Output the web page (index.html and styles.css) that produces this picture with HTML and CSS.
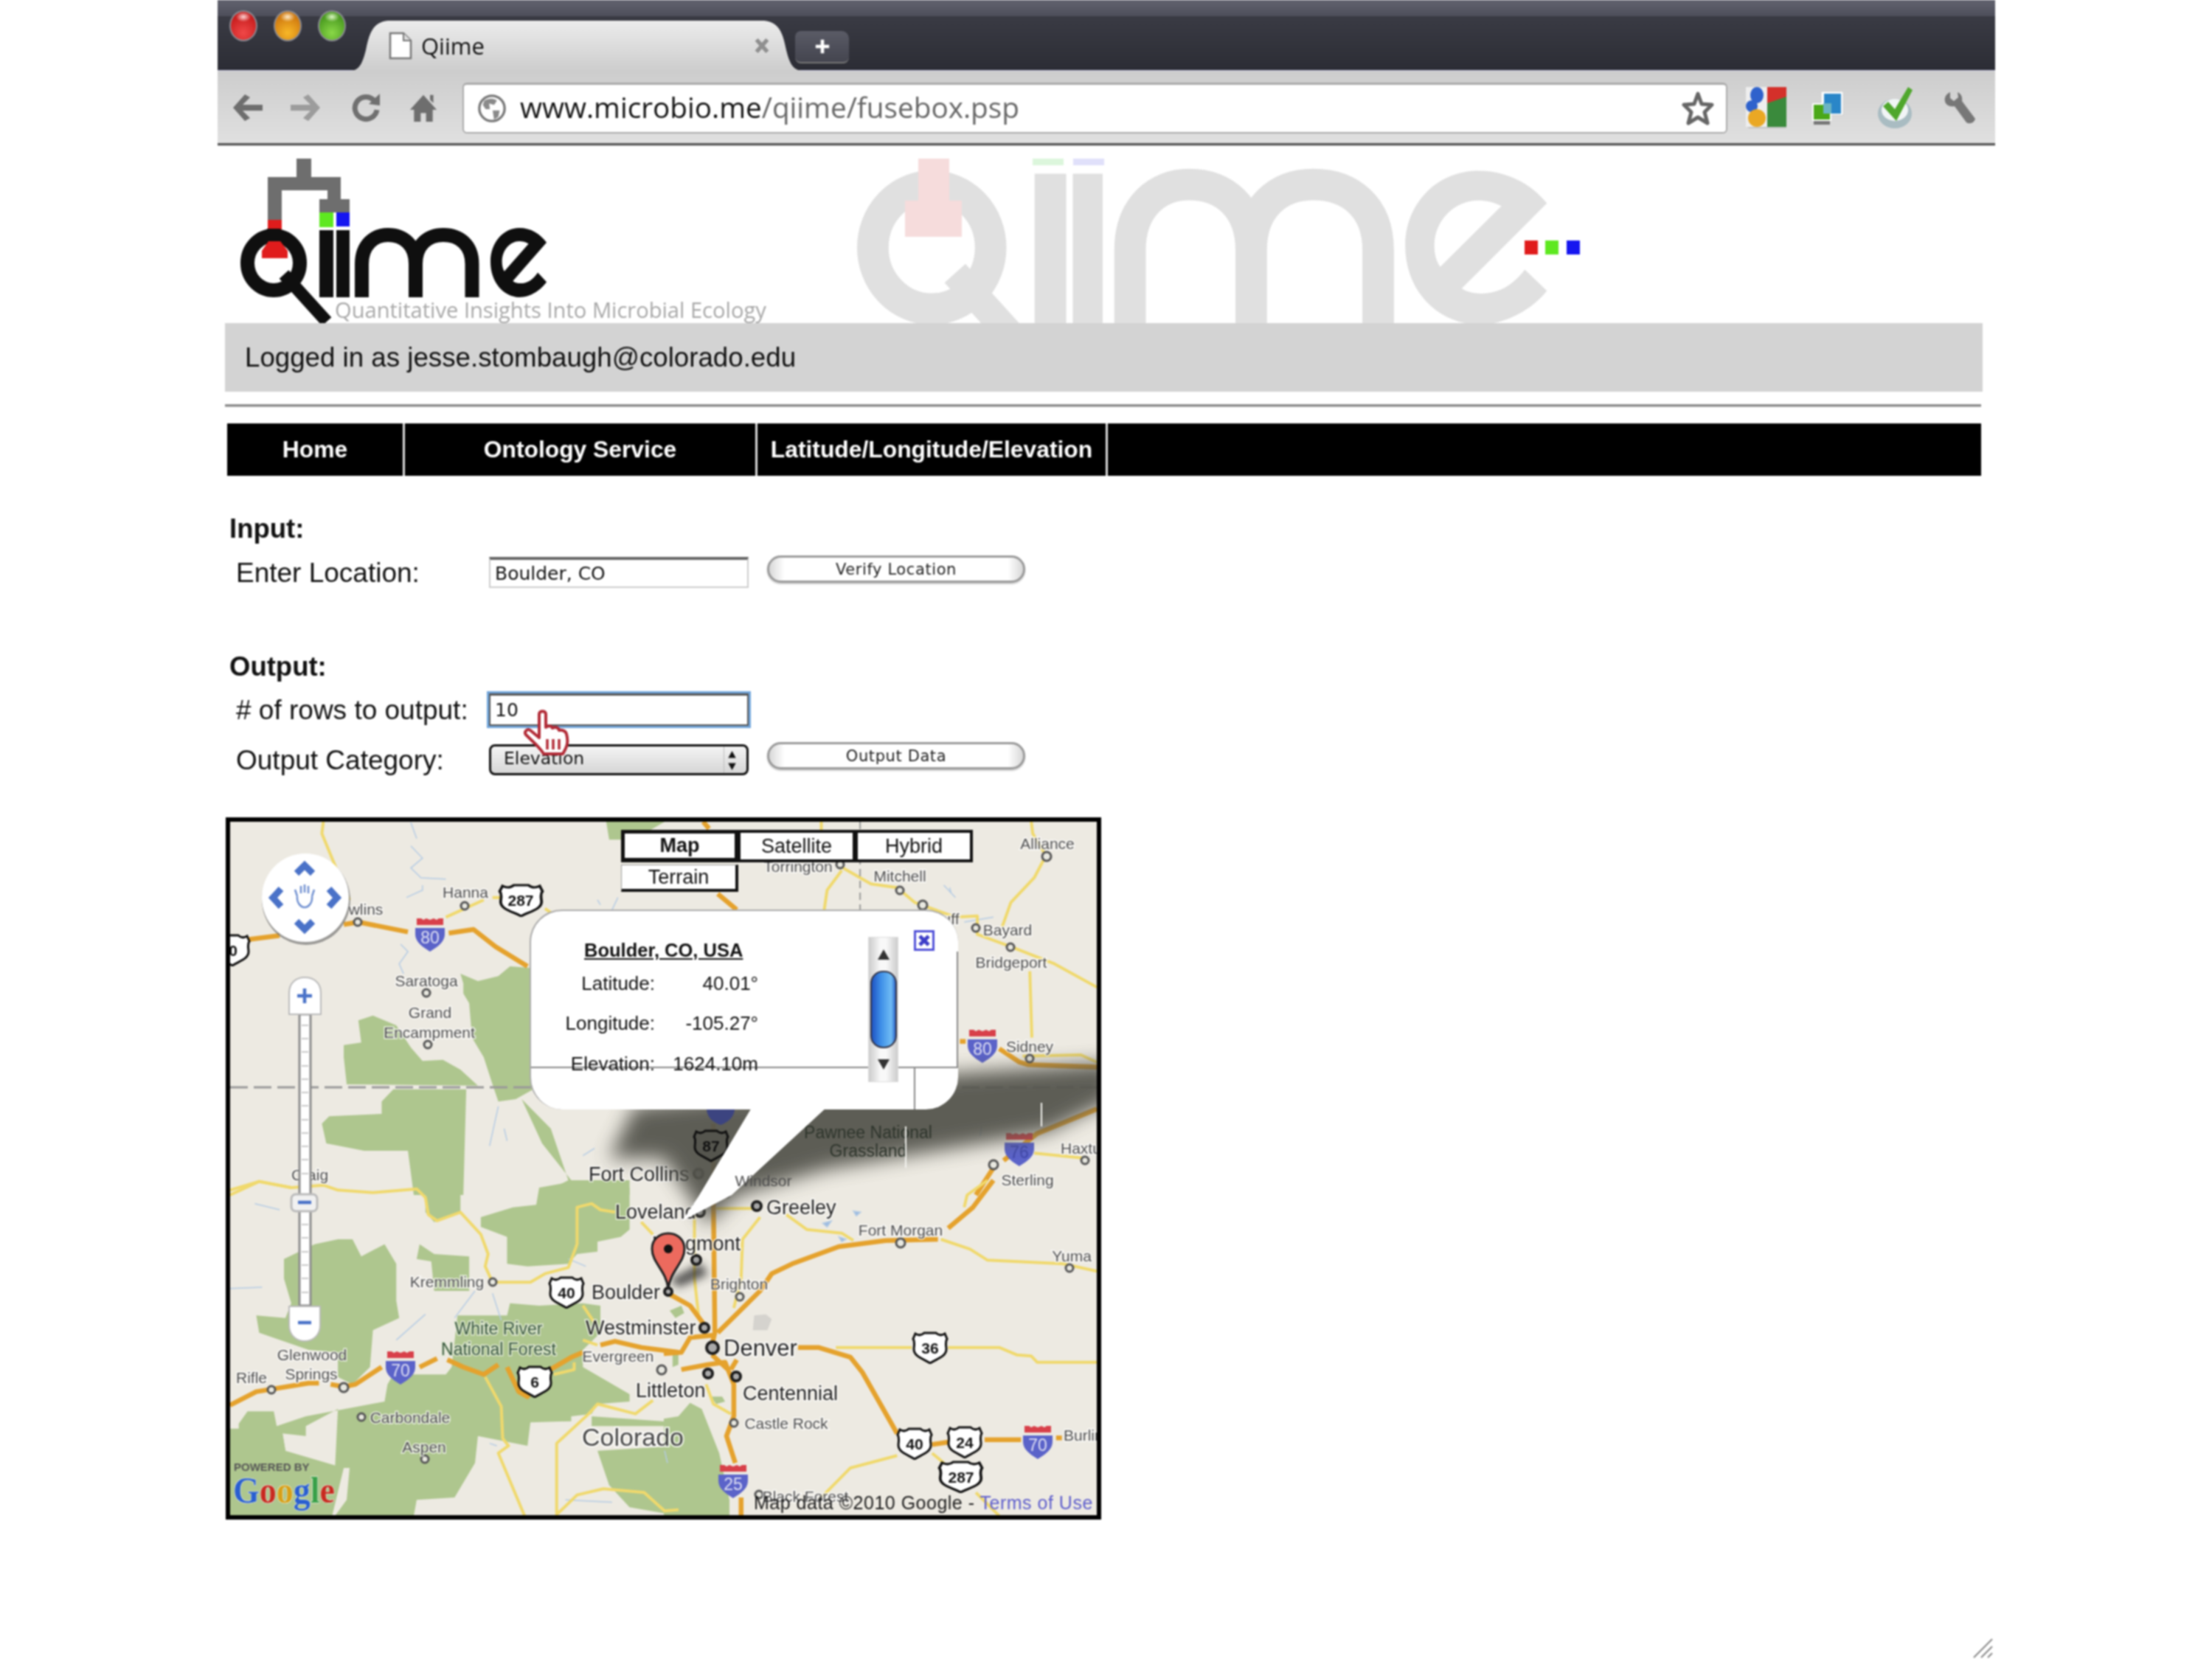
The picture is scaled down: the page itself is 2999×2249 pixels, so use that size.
FILE: index.html
```html
<!DOCTYPE html>
<html lang="en">
<head>
<meta charset="utf-8">
<title>Qiime</title>
<link rel="stylesheet" href="styles.css">
</head>
<body>
<div class="window">
  <header class="chrome">
    <div class="tabstrip">
      <div class="lights"><span class="light red"></span><span class="light amber"></span><span class="light green"></span></div>
      <div class="tab">
        <svg class="tab-bg" viewBox="0 0 616 68" preserveAspectRatio="none"><defs><linearGradient id="tabg" x1="0" y1="0" x2="0" y2="1"><stop offset="0" stop-color="#ececec"/><stop offset="1" stop-color="#cdcdcd"/></linearGradient></defs><path d="M0 68C12 68 17 60 22 40C27 14 33 2 52 0H562C581 2 587 14 592 40C597 60 602 68 616 68Z" fill="url(#tabg)"/></svg>
        <svg class="doc" viewBox="0 0 33 38"><path d="M3 2H21L31 12V36H3Z" fill="#fff" stroke="#777" stroke-width="2.5"/><path d="M21 2V12H31" fill="#ddd" stroke="#777" stroke-width="2"/></svg>
        <span class="tab-title">Qiime</span>
        <svg class="tab-close" viewBox="0 0 24 24"><path d="M4 3L20 21M20 3L4 21" stroke="#8f8f8f" stroke-width="6"/></svg>
      </div>
      <div class="newtab"><svg viewBox="0 0 24 24" class="plus"><path d="M12 2V22M2 12H22" stroke="#fff" stroke-width="5"/></svg></div>
    </div>
    <div class="toolbar">
      <div class="navbtns">
        <svg class="nav-i" viewBox="0 0 40 38"><path d="M0 19L16 1L23 5L13 15H40V23H13L23 33L16 37Z" fill="#6e6e6e"/></svg>
        <svg class="nav-i" viewBox="0 0 40 38"><path d="M40 19L24 1L17 5L27 15H0V23H27L17 33L24 37Z" fill="#9c9c9c"/></svg>
        <svg class="nav-i nav-r" viewBox="0 0 40 38"><path d="M31 9A15 15 0 1 0 35 22" fill="none" stroke="#707070" stroke-width="7"/><path d="M24 14L39 0V16Z" fill="#707070"/></svg>
        <svg class="nav-i" viewBox="0 0 40 42"><path d="M20 2L40 24H34V42H24V29H16V42H6V24H0Z" fill="#6e6e6e"/><path d="M30 2H35V14L30 9Z" fill="#6e6e6e"/></svg>
      </div>
      <div class="omnibox">
        <svg class="globe" viewBox="0 0 42 42"><circle cx="21" cy="21" r="18" fill="#fff" stroke="#777" stroke-width="3.5"/><path d="M10 10C16 6 24 6 28 10L24 16L17 14L18 22L12 22L8 16ZM22 24L32 24L30 33L24 37Z" fill="#8a8a8a"/></svg>
        <div class="url"><span class="url-host">www.microbio.me</span><span class="url-path">/qiime/fusebox.psp</span></div>
        <svg class="star" viewBox="0 0 44 46"><path d="M22 3L27 17L41 18L31 28L35 43L22 35L9 43L13 28L3 18L17 17Z" fill="#fff" stroke="#666" stroke-width="5" stroke-linejoin="round"/></svg>
      </div>
      <div class="exts">
        <svg class="ext-g" viewBox="0 0 55 56"><rect x="3" y="4" width="52" height="52" fill="#999" opacity=".35"/><path d="M29 0H55V15L29 22Z" fill="#d4302a"/><path d="M29 22L55 13V54H29V40Z" fill="#3a8a3c"/><path d="M0 0H29V54H0Z" fill="#eee"/><ellipse cx="15" cy="11" rx="9" ry="11" fill="#2f62cc"/><ellipse cx="8" cy="26" rx="8" ry="8" fill="#2f62cc"/><ellipse cx="15" cy="42" rx="12" ry="12" fill="#eaa824"/></svg>
        <svg class="ext-b" viewBox="0 0 46 48"><rect x="14" y="2" width="30" height="32" fill="#fff" stroke="#ccc"/><rect x="18" y="5" width="23" height="27" fill="#2a86c8"/><rect x="2" y="18" width="26" height="24" fill="#fff"/><rect x="4" y="20" width="22" height="20" fill="#4aa818"/><rect x="17" y="18" width="11" height="14" fill="#6cb4c4"/><rect x="4" y="42" width="22" height="5" fill="#777"/></svg>
        <svg class="ext-c" viewBox="0 0 50 56"><ellipse cx="24" cy="36" rx="23" ry="20" fill="#a9bcc2"/><ellipse cx="24" cy="31" rx="18" ry="15" fill="#f2f5f6"/><path d="M8 26L15 20L24 30L42 0L48 4L26 46Z" fill="#4fa72c"/></svg>
        <svg class="ext-w" viewBox="0 0 44 44"><path d="M9 1C2 4 0 11 3 16C6 20 10 21 15 20L31 42C36 45 42 42 43 37L25 13C26 8 24 3 19 1L20 8L14 13L9 9Z" fill="#777"/></svg>
      </div>
    </div>
  </header>

  <main class="page">
    <svg class="banner" viewBox="305 198 2383 240" width="2383" height="240">
      <defs>
        <g id="letters">
          <ellipse cx="371" cy="356.5" rx="35.500" ry="37" fill="none" stroke-width="19"/>
          <path d="M385 372L443 436" fill="none" stroke-width="17"/>
          <rect x="433" y="312" width="19" height="91" stroke="none"/>
          <rect x="456" y="312" width="18" height="91" stroke="none"/>
          <path d="M490.500 403V358C490.500 332 507 318.500 526 318.500C547 318.500 563.500 332 563.500 358V403M563.500 358C563.500 332 580 318.500 601 318.500C623 318.500 640 332 640 358V403" fill="none" stroke-width="19"/>
        </g>
        <path id="epath" fill-rule="evenodd" d="M768 720C740 650 700 605 650 605C580 605 525 720 525 870C525 1030 580 1145 650 1150C700 1150 745 1090 768 1030L730 955C710 1010 685 1040 655 1040C645 1040 630 1035 622 1022ZM690 730C675 715 665 710 650 710C610 710 575 780 575 870C575 900 578 925 585 945Z"/>
      </defs>
      <use href="#letters" class="wm-l" transform="translate(1162 231) scale(2.25) translate(-326 -310)"/>
      <use href="#epath" class="wm-e" transform="translate(1490 0) scale(.7908 .3827)"/>
      <path class="wm-r" d="M1245 215H1287V272H1304V321H1227V272H1245Z"/>
      <rect class="wm-g" x="1400" y="215" width="42" height="9"/>
      <rect class="wm-b" x="1455" y="215" width="42" height="9"/>
      <rect class="lg-r" x="2067" y="326" width="18" height="19"/>
      <rect class="lg-g" x="2095" y="326" width="18" height="19"/>
      <rect class="lg-bl" x="2124" y="326" width="18" height="19"/>
      <path class="tree" d="M402 215H422V240H462V270H474V288H433V270H444V258H382V298H363V240H402Z"/>
      <rect class="lg-r" x="363" y="298" width="19" height="17"/>
      <rect class="lg-g" x="433" y="288" width="19" height="20"/>
      <rect class="lg-bl" x="456" y="288" width="18" height="19"/>
      <use href="#letters" class="sm-l"/>
      <use href="#epath" class="sm-e" transform="translate(665 309) scale(.3128 .1725) translate(-525 -605)"/>
      <path class="lg-r" d="M364 327H380L390 340V350H355V340Z"/>
      <path class="q-over" d="M362 310H380V327H362Z"/>
      <text class="tagline" x="454" y="431">Quantitative Insights Into Microbial Ecology</text>
    </svg>

    <div class="status">Logged in as jesse.stombaugh@colorado.edu</div>
    <div class="rule"></div>

    <nav class="menu">
      <a class="menu-item m-home">Home</a>
      <a class="menu-item m-onto">Ontology Service</a>
      <a class="menu-item m-lat">Latitude/Longitude/Elevation</a>
    </nav>

    <form class="form">
      <h2 class="form-title">Input:</h2>
      <div class="field field-1">
        <label class="field-label">Enter Location:</label>
        <input class="box" type="text" value="Boulder, CO">
        <button class="btn" type="button">Verify Location</button>
      </div>
      <h2 class="form-title title-out">Output:</h2>
      <div class="field field-2">
        <label class="field-label">#&nbsp;of rows to output:</label>
        <input class="box box-focus" type="text" value="10">
      </div>
      <div class="field field-3">
        <label class="field-label">Output Category:</label>
        <div class="sel-wrap">
          <select class="sel"><option>Elevation</option></select>
          <svg class="sel-arrows" viewBox="0 0 16 30"><path d="M8 0L14 11H2ZM8 30L2 19H14Z" fill="#111"/></svg>
        </div>
        <button class="btn" type="button">Output Data</button>
      </div>
      <svg class="hand" viewBox="0 0 63 62"><path d="M22 6C22 1 31 1 31 6V24C35 21 39 22 40 25C44 23 48 24 49 28C53 27 58 29 59 33C62 44 60 50 54 60H28C24 52 14 44 4 34C1 30 6 25 10 28L22 38Z" fill="#fff" stroke="#b22a36" stroke-width="4" stroke-linejoin="round"/><path d="M33 40V54M41 40V54M49 40V54" stroke="#b22a36" stroke-width="3.500"/></svg>
    </form>

    <section class="map">
      <svg class="map-svg" viewBox="312 1114 1175 940" width="1175" height="940">
        <defs>
          <symbol id="us" viewBox="0 0 50 44" preserveAspectRatio="none"><path d="M5 3C10 6 14 5 17 2H33C36 5 40 6 45 3L48 10C45 14 47 20 47 24C47 34 34 37 25 43C16 37 3 34 3 24C3 20 5 14 2 10Z" fill="#fff" stroke="#111" stroke-width="3"/></symbol>
          <symbol id="is" viewBox="0 0 42 46"><path d="M3 10V1H9L12 3L16 1L21 3L26 1L30 3L33 1H39V10Z" fill="#d8404a"/><path d="M1 14H41V22C41 34 30 40 21 46C12 40 1 34 1 22Z" fill="#5b63c9"/></symbol>
          <filter id="sblur" x="-10%" y="-30%" width="120%" height="160%"><feGaussianBlur stdDeviation="13"/></filter>
          <filter id="pblur" x="-30%" y="-60%" width="160%" height="220%"><feGaussianBlur stdDeviation="6"/></filter>
          <linearGradient id="thumbg" x1="0" y1="0" x2="1" y2="0"><stop offset="0" stop-color="#1d4fc0"/><stop offset=".4" stop-color="#3f90e8"/><stop offset=".8" stop-color="#70bcf4"/><stop offset="1" stop-color="#1f55c4"/></linearGradient>
        </defs>
        <rect class="land" x="312" y="1114" width="1175" height="940"/>
        <g class="park" transform="translate(300 1100) scale(.3954 .3333)">
          <path d="M1320 42H1520L1480 70L1410 115H1330Z"/>
          <path d="M820 660L830 700L830 740L850 780L860 920L900 1000L930 1110L950 1180L1010 1170L1100 1110L1100 640L990 630L950 670L880 690Z"/>
          <path d="M420 950L480 940L470 850L520 830L600 870L650 960L690 1015L760 1010L820 1050L880 1115L430 1110L420 1000Z"/>
          <path d="M550 1180L590 1130L840 1130L830 1560L660 1560L640 1380L490 1380L360 1350L345 1270L370 1240L550 1230Z"/>
          <path d="M1030 1170L1130 1290L1190 1500L1090 1560L1400 1560L1400 1500L1300 1500L1200 1500L1100 1350Z"/>
        </g>
        <g class="park" transform="translate(300 1600) scale(.3954 .3333)">
          <path d="M700 0H820V130L730 170L700 130Z"/>
          <path d="M890 150L1000 110L1080 100L1090 30L1230 0L1400 30L1400 200L1370 230L1290 250L1290 290L1220 300L1190 340L1050 350L980 340L980 230L890 190Z"/>
          <path d="M215 320L320 260L400 240L450 240L480 310L560 260L600 340L600 490L610 560L520 610L510 760L450 830L400 800L400 700L300 690L130 620L120 550L220 560L240 500L215 400Z"/>
          <path d="M680 260L730 300L850 310L850 450L730 450L720 330L670 320Z"/>
          <path d="M570 830L590 790L770 790L790 760L810 550L980 550L990 500L1090 510L1240 500L1300 510L1300 620L1240 690L1240 760L1400 870L1400 900L1290 910L1270 950L1200 960L1200 980L1060 985L1050 1080L880 1040L870 1150L800 1290L670 1300L660 1365L390 1365L430 1300L440 1170L390 1170L400 930L290 1000L290 1040L210 1030L220 1100L60 1030L60 990L90 940L180 940L190 1000L290 960L560 900Z"/>
          <path d="M30 1010H60L210 1030L220 1100L420 1170L380 1365H30Z"/>
          <path d="M1290 1100L1568 1080V1365L1400 1330L1330 1240Z"/>
          <path d="M1270 960L1568 985V1000L1270 1000Z"/>
        </g>
        <g class="park" transform="translate(900 1600) scale(.3954 .3333)">
          <path d="M0 970L50 960L90 905L130 930L160 1020L190 1110L225 1300L225 1365H0Z"/>
          <path d="M20 530L60 510L70 540L40 560ZM30 710L50 700L50 750L30 760ZM160 880L200 880L210 900L180 910Z"/>
          <path class="urban" d="M310 550L350 545L370 565L355 610H305Z"/>
        </g>
        <g class="water" transform="translate(300 1100) scale(.3954 .3333)">
          <path d="M650 45L670 110M650 140L690 190L650 230L685 270L770 275M690 300L690 320L635 350M615 540L640 570L610 620L625 660M1340 400L1360 350M1290 360L1300 380M1240 1400L1280 1370M950 1200L920 1360M970 1290L980 1340"/>
        </g>
        <g class="water" transform="translate(300 1600) scale(.3954 .3333)">
          <path d="M115 95L200 120M30 440L140 435M800 560L870 450M930 460L960 570M600 650L700 545M1190 320L1250 350M920 1070L945 1080M1180 1300L1340 1310M1520 1100L1530 1150"/>
        </g>
        <g class="water" transform="translate(900 1100) scale(.3954 .3333)">
          <path d="M980 310L985 330M960 300L1000 350M1030 450L1130 430M1090 1280L1085 1320"/>
        </g>
        <g class="water water-f" transform="translate(900 1600) scale(.3954 .3333)">
          <path d="M545 175L575 165L560 190ZM600 230L625 240L610 250ZM650 125L675 130L660 145Z"/>
        </g>
        <g transform="translate(300 1100) scale(.3954 .3333)">
          <path class="rd-y" d="M350 42L345 90L390 220L440 360M770 430L900 360M930 350L960 350M1110 395L1140 420M30 1560L130 1505L240 1530"/>
          <path class="rd-o" d="M30 545L100 520L200 505M420 460L470 450L640 490M780 495L865 480L940 550L1050 630"/>
        </g>
        <g transform="translate(900 1100) scale(.3954 .3333)">
          <path class="rd-y" d="M540 42V75M615 230L710 295L800 310L860 370L1000 430L1075 425L1075 500L1190 550L1340 620L1485 715M610 240L560 320L550 400M1260 42L1265 90L1310 180L1270 270L1190 370L1160 470M1255 650L1262 920M1230 995L1430 990L1485 1020M1270 1390L1440 1410M250 1300L240 1400"/>
          <path class="rd-o" d="M135 42L155 70M185 335L250 400M1015 935H1035M1150 965L1220 1020L1250 1030L1485 1040M1165 1420L1280 1310L1485 1210M1130 1450L1070 1560M170 1270V1560"/>
          <path class="map-edge" d="M673 42V400"/>
        </g>
        <g transform="translate(300 1600) scale(.3954 .3333)">
          <path class="rd-y" d="M30 40L130 5L240 30L350 20L400 40L520 50L670 35L700 70L710 140L740 165L820 130L890 220L915 300L905 350L930 415H1060L1110 380L1190 355L1220 260V110L1270 95L1300 120L1350 130M905 800L960 920L965 1050L985 1080L950 1110L1040 1365M1150 1365V1070L1260 950L1290 910L1420 950L1480 895M1150 1360L1220 1280L1310 1255L1450 1270L1520 1345L1568 1340M1140 790L1210 770V740M1240 510L1280 580M1240 650L1290 670M1440 170L1480 220"/>
          <path class="rd-o" d="M30 915L120 860L300 825L335 825M375 830L420 840L460 830L550 760M680 760L740 725M775 730L830 760L900 790L950 750M980 760L1020 860L1050 880L1100 790L1200 720L1240 700M1300 670L1350 655L1440 680L1568 700"/>
        </g>
        <g transform="translate(900 1600) scale(.3954 .3333)">
          <path class="rd-y" d="M590 680H850M975 680H1150L1210 710L1260 715L1280 740H1485M950 240L1050 280L1110 325L1370 340L1485 370M420 140L490 200L610 215L650 245M180 115H320M330 150L270 240L265 400L240 520M105 130V400L120 560M145 830L170 910L230 950M540 1290L640 1170L800 1120M920 1110L960 1150M1070 1270L1150 1365M1110 0L1040 60L1030 110"/>
          <path class="rd-o" d="M170 80L175 620L165 670M185 620L330 450L370 380L440 340L600 270L760 245L940 240M975 195L1060 110L1130 0M15 460L90 510L140 590M0 705L60 700L90 640L170 630M60 770L150 750L210 740L240 830V960L215 1040L245 1150M165 710L220 770M250 730L230 770M460 680H530L640 720L680 780L800 1030M920 1075L975 1065M1100 1055H1225M1345 1048H1365M265 1290V1365"/>
        </g>
        <path class="border" d="M312 1474H1487"/>

        <g class="dots">
          <circle cx="485" cy="1250" r="5"/><circle cx="630" cy="1228" r="5"/><circle cx="578" cy="1346" r="5"/><circle cx="580" cy="1416" r="5"/><circle cx="1139" cy="1172" r="5"/><circle cx="1220" cy="1207" r="5"/><circle cx="1251" cy="1227" r="6"/><circle cx="1419" cy="1161" r="6"/><circle cx="1323" cy="1258" r="5"/><circle cx="1370" cy="1284" r="5"/><circle cx="1396" cy="1435" r="5"/><circle cx="1471" cy="1573" r="5"/><circle cx="1347" cy="1579" r="6"/><circle cx="985" cy="1618" r="5"/><circle cx="1221" cy="1685" r="6"/><circle cx="1450" cy="1719" r="5"/><circle cx="1003" cy="1758" r="5"/><circle cx="897" cy="1857" r="6"/><circle cx="995" cy="1929" r="5"/><circle cx="668" cy="1738" r="5"/><circle cx="466" cy="1881" r="6"/><circle cx="368" cy="1884" r="5"/><circle cx="490" cy="1921" r="5"/><circle cx="576" cy="1978" r="5"/><circle cx="1029" cy="2026" r="5"/>
        </g>
        <g class="dots dots-b">
          <circle cx="947" cy="1591" r="6"/><circle cx="1026" cy="1635" r="6"/><circle cx="949" cy="1643" r="6"/><circle cx="944" cy="1708" r="6"/><circle cx="906" cy="1751" r="5"/><circle cx="955" cy="1800" r="6"/><circle cx="960" cy="1862" r="6"/><circle cx="998" cy="1866" r="6"/><circle cx="966" cy="1827" r="8"/>
        </g>

        <use href="#us" x="675" y="1198" width="63" height="45"/>
        <use href="#us" x="290" y="1266" width="50" height="44"/>
        <use href="#us" x="743" y="1730" width="50" height="44"/>
        <use href="#us" x="700" y="1851" width="50" height="44"/>
        <use href="#us" x="1236" y="1805" width="50" height="44"/>
        <use href="#us" x="1215" y="1935" width="50" height="44"/>
        <use href="#us" x="1283" y="1933" width="50" height="44"/>
        <use href="#us" x="1271" y="1980" width="63" height="44"/>
        <use href="#is" x="562" y="1244" width="42" height="46"/>
        <use href="#is" x="1311" y="1395" width="42" height="46"/>
        <use href="#is" x="1361" y="1535" width="42" height="46"/>
        <use href="#is" x="522" y="1831" width="42" height="46"/>
        <use href="#is" x="1386" y="1932" width="42" height="46"/>
        <use href="#is" x="973" y="1985" width="42" height="46"/>
        <text class="sh c" x="706" y="1220">287</text><text class="sh c" x="316" y="1288">0</text><text class="sh c" x="768" y="1752">40</text><text class="sh c" x="725" y="1873">6</text><text class="sh c" x="1261" y="1827">36</text><text class="sh c" x="1240" y="1957">40</text><text class="sh c" x="1308" y="1955">24</text><text class="sh c" x="1303" y="2002">287</text>
        <text class="sh-i c" x="583" y="1271">80</text><text class="sh-i c" x="1332" y="1422">80</text><text class="sh-i c sh-dim" x="1382" y="1562">76</text><text class="sh-i c" x="543" y="1858">70</text><text class="sh-i c" x="1407" y="1959">70</text><text class="sh-i c" x="994" y="2012">25</text>

        <g class="lb">
          <text class="c" x="496" y="1232">wlins</text><text class="c" x="631" y="1209">Hanna</text><text class="c" x="578" y="1329">Saratoga</text><text class="c" x="583" y="1372">Grand</text><text class="c" x="582" y="1399">Encampment</text><text class="c" x="420" y="1592">Craig</text>
          <text class="c" x="1420" y="1143">Alliance</text><text class="c" x="1082" y="1174">Torrington</text><text class="c" x="1220" y="1187">Mitchell</text><text class="c" x="1289" y="1245">uff</text><text class="c" x="1366" y="1260">Bayard</text><text class="c" x="1371" y="1304">Bridgeport</text><text class="c" x="1396" y="1418">Sidney</text><text x="1438" y="1556">Haxtun</text><text class="c" x="1393" y="1599">Sterling</text><text class="c" x="1221" y="1667">Fort Morgan</text><text class="c" x="1453" y="1702">Yuma</text><text class="c" x="1002" y="1740">Brighton</text><text class="c" x="838" y="1838">Evergreen</text><text class="c" x="1066" y="1929">Castle Rock</text><text class="c" x="606" y="1737">Kremmling</text><text class="c" x="423" y="1836">Glenwood</text><text class="c" x="422" y="1862">Springs</text><text class="c" x="341" y="1867">Rifle</text><text class="c" x="556" y="1921">Carbondale</text><text class="c" x="575" y="1961">Aspen</text><text class="c" x="1092" y="2028">Black Forest</text><text x="1442" y="1945">Burlington</text>
        </g>
        <g class="lb lb-d">
          <text x="798" y="1592">Fort Collins</text><text x="1039" y="1637">Greeley</text><text x="834" y="1643">Loveland</text><text x="884" y="1686">Longmont</text><text x="802" y="1752">Boulder</text><text x="794" y="1800">Westminster</text><text x="862" y="1885">Littleton</text><text x="1007" y="1889">Centennial</text>
        </g>
        <text class="lb-denver" x="981" y="1827">Denver</text>
        <text class="lb-co" x="789" y="1948">Colorado</text>
        <g class="lb-f"><text class="c" x="676" y="1801">White River</text><text class="c" x="676" y="1829">National Forest</text></g>
        <text class="pwr" x="317" y="1988">POWERED BY</text>
        <text class="goog" x="316" y="2037" textLength="138" lengthAdjust="spacingAndGlyphs"><tspan class="gb">G</tspan><tspan class="gr">o</tspan><tspan class="gy">o</tspan><tspan class="gb">g</tspan><tspan class="gg">l</tspan><tspan class="gr">e</tspan></text>

        <path class="bshadow" d="M860 1500L1298 1455L1510 1440V1490L1420 1535L1300 1555L1120 1585L1000 1620L960 1660L900 1570L826 1570Z"/>
        <path class="pshadow" d="M908 1735L950 1712L960 1728L920 1745Z"/>
        <path class="is-dark" d="M958 1503H996C996 1515 985 1522 977 1525C968 1522 958 1515 958 1503Z"/>
        <path class="us-dark" transform="translate(939 1531)" d="M5 3C10 6 14 5 17 2H33C36 5 40 6 45 3L48 10C45 14 47 20 47 24C47 34 34 37 25 43C16 37 3 34 3 24C3 20 5 14 2 10Z"/>
        <text class="sh c" x="964" y="1553">87</text>
        <g class="lb-p"><text class="c" x="1177" y="1535">Pawnee National</text><text class="c" x="1177" y="1560">Grassland</text></g>
        <path class="glitch" d="M1412 1495V1527M1228 1527V1583"/>
        <path class="tail" d="M1020 1500L947 1622L925 1655L992 1620L1122 1500Z"/>
        <text class="lb-w c" x="1035" y="1600">Windsor</text>

        <g class="pin">
          <path d="M906 1747C903 1722 884 1712 884 1693C884 1680 894 1672 906 1672C918 1672 928 1680 928 1693C928 1712 909 1722 906 1747Z"/>
          <circle cx="906" cy="1693" r="6"/>
        </g>
        <text class="map-copy" x="1022" y="2037">Map data ©2010 Google - <tspan class="map-link">Terms of Use</tspan></text>

        <g class="ctl">
          <ellipse class="ctl-sh" cx="415" cy="1220" rx="60" ry="61"/>
          <ellipse class="ctl-w" cx="414" cy="1217" rx="59" ry="60"/>
          <path class="chev" d="M402 1184L413 1173L424 1184M402 1249L413 1260L424 1249M381 1205L370 1217L381 1229M446 1205L457 1217L446 1229"/>
          <path class="handc" d="M403 1215L400 1206M408 1211V1201M413 1210V1199M418 1211V1201M423 1215L426 1206M403 1215C402 1224 408 1230 413 1230C418 1230 424 1224 423 1215"/>
          <rect class="track" x="406" y="1375" width="15" height="395"/>
          <path class="ticks" d="M409 1390H418M409 1408H418M409 1426H418M409 1445H418M409 1463H418M409 1481H418M409 1499H418M409 1518H418M409 1536H418M409 1554H418M409 1572H418M409 1591H418M409 1660H418M409 1678H418M409 1697H418M409 1715H418M409 1733H418M409 1752H418"/>
          <path class="cap" d="M392 1375V1346C392 1332 402 1325 413 1325C425 1325 435 1332 435 1346V1375Z"/>
          <path class="cap" d="M392 1771H434V1797C434 1810 424 1818 413 1818C402 1818 392 1810 392 1797Z"/>
          <rect class="thumb" x="395" y="1619" width="35" height="23" rx="6"/>
          <path class="pm" d="M403 1350H423M413 1340V1360M404 1793H422M404 1630H422"/>
        </g>
      </svg>

      <div class="maptypes">
        <span class="mt mt-on">Map</span><span class="mt">Satellite</span><span class="mt">Hybrid</span><span class="mt mt-t">Terrain</span>
      </div>

      <div class="bubble">
        <i class="art art-h"></i><i class="art art-v"></i><i class="art art-r"></i>
        <div class="b-title">Boulder, CO, USA</div>
        <dl class="b-data">
          <dt>Latitude:</dt><dd>40.01°</dd>
          <dt>Longitude:</dt><dd>-105.27°</dd>
          <dt>Elevation:</dt><dd>1624.10m</dd>
        </dl>
        <div class="scroll">
          <svg class="scroll-a" viewBox="0 0 16 14"><path d="M8 0L16 14H0Z" fill="#333"/></svg>
          <div class="scroll-t"><svg viewBox="0 0 36 105" preserveAspectRatio="none"><rect x="1" y="1" width="34" height="103" rx="16" fill="url(#thumbg)" stroke="#334" stroke-width="2"/></svg></div>
          <svg class="scroll-a" viewBox="0 0 16 14"><path d="M8 14L0 0H16Z" fill="#333"/></svg>
        </div>
        <svg class="b-close" viewBox="0 0 28 28"><rect x="1.500" y="1.500" width="25" height="25" fill="#fff" stroke="#5050d8" stroke-width="3"/><path d="M8 8L20 20M20 8L8 20" stroke="#3c3cc8" stroke-width="5"/></svg>
      </div>
    </section>
  </main>
  <svg class="grip" viewBox="0 0 28 28"><path d="M2 27L27 2M12 27L27 12M21 27L27 21" stroke="#888" stroke-width="2"/></svg>
</div>
</body>
</html>
```
FILE: styles.css
```css
* { box-sizing: border-box; }
html, body { margin: 0; background: #fff; }
body { padding-left: 295px; height: 2249px; overflow: hidden; }
.window { width: 2410px; height: 2249px; position: relative; background: #fff; filter: blur(1px); }

/* browser chrome */
.tabstrip { height: 96px; display: flex; align-items: flex-start; padding-left: 16px; background: linear-gradient(#62636f 0, #4d4e5a 22px, #3a3b44 22px, #2c2d35 95px, #c9c9e6 95px); }
.lights { display: flex; gap: 22px; margin-top: 14px; }
.light { width: 38px; height: 42px; border-radius: 50%; border: 2px solid #8a8a92; }
.red { background: radial-gradient(ellipse 30% 18% at 50% 18%, #ffd8d8 0, #fff0 100%), radial-gradient(circle at 50% 75%, #f04848 0, #c81e1e 70%); }
.amber { background: radial-gradient(ellipse 30% 18% at 50% 18%, #ffeccc 0, #fff0 100%), radial-gradient(circle at 50% 75%, #f8b828 0, #d07a10 70%); }
.green { background: radial-gradient(ellipse 30% 18% at 50% 18%, #e0f8c8 0, #fff0 100%), radial-gradient(circle at 50% 75%, #8ad848 0, #4a9a20 70%); }
.tab { position: relative; margin: 28px 0 0 5px; width: 616px; height: 68px; display: flex; align-items: center; padding: 0 46px 0 52px; }
.tab-bg { position: absolute; inset: 0; width: 100%; height: 100%; }
.doc { position: relative; width: 33px; height: 38px; margin-right: 12px; }
.tab-title { position: relative; font: 31px "Open Sans", sans-serif; color: #111; }
.tab-close { position: relative; width: 22px; height: 22px; margin-left: auto; }
.newtab { width: 73px; height: 44px; margin: 42px 0 0 -12px; border-radius: 8px 10px 8px 8px; background: linear-gradient(#5a5b66, #44454f); border-bottom: 2px solid #777; display: flex; align-items: center; justify-content: center; }
.plus { width: 22px; height: 22px; }

.toolbar { height: 102px; display: flex; align-items: center; padding: 0 0 2px 21px; background: linear-gradient(#cdcdcd, #e0e0e0 96%, #555 96%, #555 99%, #ccc 99%); }
.navbtns { display: flex; gap: 38px; width: 311px; align-items: center; }
.nav-i { width: 40px; height: 38px; }
.nav-r { margin-left: 4px; }
.omnibox { width: 1715px; height: 69px; display: flex; align-items: center; padding: 0 16px 0 18px; background: #fff; border: 2px solid #aaa; border-radius: 6px; border-top-width: 3px; }
.globe { width: 40px; height: 42px; margin-right: 18px; }
.url { font: 38.700px/60px "Open Sans", sans-serif; white-space: nowrap; padding-bottom: 4px; }
.url-host { color: #111; }
.url-path { color: #666; }
.star { width: 44px; height: 46px; margin-left: auto; }
.exts { display: flex; align-items: center; margin-left: 25px; }
.ext-g { width: 55px; height: 56px; }
.ext-b { width: 46px; height: 48px; margin-left: 33px; }
.ext-c { width: 50px; height: 56px; margin-left: 44px; }
.ext-w { width: 44px; height: 44px; margin-left: 40px; }

/* page */
.page { padding: 0 18px 0 10px; }
.banner { display: block; }
.wm-l, .wm-e { stroke: #e0e0e0; fill: #e0e0e0; }
.wm-e { stroke: none; }
.sm-l, .sm-e { stroke: #0f0f0f; fill: #0f0f0f; }
.sm-e { stroke: none; }
.wm-r { fill: #f6dcdc; }
.wm-g { fill: #dcf6dc; }
.wm-b { fill: #e0e0fa; }
.lg-r { fill: #e01c1c; }
.lg-g { fill: #5ee820; }
.lg-bl { fill: #1616f0; }
.tree { fill: #6e6e6e; }
.q-over { fill: #0f0f0f; }
.tagline { font: 29.100px "Open Sans", sans-serif; fill: #a8a8a8; }

.status { height: 93px; width: 2383px; padding-left: 27px; display: flex; align-items: center; background: #d3d3d3; font: 36.700px "Liberation Sans", sans-serif; color: #111; }
.rule { width: 2381px; height: 4px; margin-top: 17px; background: linear-gradient(#8a8a8a 70%, #ccc 70%); }
.menu { margin: 22px 0 0 3px; width: 2378px; height: 71px; background: #000; display: flex; }
.menu-item { display: flex; align-items: center; justify-content: center; height: 71px; border-right: 3px solid #ddd; font: bold 31.800px "Liberation Sans", sans-serif; color: #fff; }
.m-home { width: 241px; }
.m-onto { width: 478px; }
.m-lat { width: 475px; }

.form { position: relative; font-family: "Liberation Sans", sans-serif; }
.form-title { margin: 0; padding: 52px 0 0 6px; font: bold 36.500px/40px "Liberation Sans", sans-serif; color: #111; }
.title-out { padding-top: 87px; }
.field { display: grid; grid-template-columns: 343px 352px 375px; padding-left: 15px; align-items: start; }
.field-1 { margin-top: 16px; }
.field-2 { margin-top: 13px; }
.field-3 { margin-top: 19px; }
.field-label { font: 37px/44px "Liberation Sans", sans-serif; color: #111; white-space: nowrap; }
.field-1 .field-label { padding-top: 2px; height: 44px; }
.field-2 .field-label { line-height: 51px; height: 50px; }
.field-3 .field-label { height: 45px; line-height: 50px; }
.box { width: 352px; height: 42px; margin-top: 2px; padding: 0 6px; border: 2px solid #ccc; border-top: 4px solid #666; background: #fff; font: 25px "DejaVu Sans", sans-serif; color: #111; border-radius: 0; outline: 0; }
.box-focus { height: 44px; margin-top: 3px; border: 2px solid #555; border-top-width: 3px; box-shadow: 0 0 0 3px #72a6dc; }
.sel-wrap { position: relative; width: 352px; height: 42px; margin-top: 3px; }
.sel { appearance: none; width: 352px; height: 42px; padding: 0 0 4px 17px; border: 3px solid #111; border-radius: 8px; background: linear-gradient(90deg, #0000 91%, #bbb 91%, #bbb 91.300%, #0000 91.300%), linear-gradient(#f4f4f4, #d6d6d6); font: 23.500px "DejaVu Sans", sans-serif; color: #111; }
.sel-arrows { position: absolute; right: 15px; top: 9px; width: 15px; height: 26px; }
.btn { width: 350px; height: 37px; margin-left: 25px; padding: 0; border: 3px solid #9a9a9a; border-radius: 19px; background: linear-gradient(90deg, #d8d8d8, #fff 6%, #fff 94%, #d8d8d8), #fff; box-shadow: 0 2px 2px #ccc; font: 21px "DejaVu Sans", sans-serif; letter-spacing: .6px; color: #222; }
.hand { position: absolute; left: 404px; top: 317px; width: 63px; height: 62px; }

/* map */
.map { position: relative; margin: 57px 0 0 1px; width: 1187px; height: 952px; border: 6px solid #000; overflow: hidden; }
.map-svg { display: block; font-family: "Liberation Sans", sans-serif; }
.land { fill: #edeae2; }
.park path { fill: #aec68e; }
.park .urban { fill: #d5d3ce; }
.water path { fill: none; stroke: #b4cbe4; stroke-width: 1.500; vector-effect: non-scaling-stroke; }
.water-f path { fill: #9dbbe0; }
.rd-y { fill: none; stroke: #f0d96c; stroke-width: 4; stroke-linejoin: round; vector-effect: non-scaling-stroke; }
.rd-o { fill: none; stroke: #e5a22d; stroke-width: 6.500; stroke-linejoin: round; vector-effect: non-scaling-stroke; }
.map-edge { fill: none; stroke: #999; stroke-width: 2; stroke-dasharray: 10 6; vector-effect: non-scaling-stroke; }
.border { fill: none; stroke: #999; stroke-width: 3; stroke-dasharray: 24 8; }
.dots circle { fill: #e8e8e0; stroke: #555; stroke-width: 3; }
.dots-b circle { stroke: #1c1c1c; stroke-width: 4; fill: #aaa; }
.c { text-anchor: middle; }
.map-svg text { dominant-baseline: central; }
.sh { font-size: 21px; font-weight: bold; fill: #111; }
.sh-i { font-size: 23px; fill: #dfe0f4; }
.sh-dim { fill: #4048a8; }
.lb text { font-size: 21px; fill: #4c4c4c; stroke: #fff; stroke-width: 3px; paint-order: stroke; stroke-opacity: .75; }
.lb-d text { font-size: 27px; fill: #222; }
.lb-denver { font-size: 31px; fill: #222; stroke: #fff; stroke-width: 3px; paint-order: stroke; }
.lb-co { font-size: 34px; fill: #444; stroke: #fff; stroke-width: 4px; paint-order: stroke; stroke-opacity: .8; }
.lb-f text { font-size: 23px; fill: #35553a; stroke: #dfe8d2; stroke-width: 3px; paint-order: stroke; }
.lb-p text { font-size: 23px; fill: #2e352c; }
.lb-w { font-size: 21px; fill: #4c4c4c; }
.pwr { font-size: 15px; font-weight: bold; fill: #555; }
.map-svg .goog { font: bold 50px "Liberation Serif", serif; dominant-baseline: auto; stroke: #fff; stroke-width: 1px; paint-order: stroke; }
.gb { fill: #2a5fd0; }
.gr { fill: #c82a20; }
.gy { fill: #d8a018; }
.gg { fill: #38a048; }
.bshadow { fill: #55554e; opacity: .94; filter: url(#sblur); }
.pshadow { fill: #333; opacity: .8; filter: url(#pblur); }
.is-dark { fill: #3c4480; }
.us-dark { fill: #55554e; stroke: #111; stroke-width: 3; }
.glitch { fill: none; stroke: #f4f4f0; stroke-width: 2; }
.tail { fill: #fff; }
.pin path { fill: #ec6a5e; stroke: #222; stroke-width: 3; }
.pin circle { fill: #111; }
.map-copy { font-size: 25px; letter-spacing: .5px; fill: #1c1c1c; }
.map-link { fill: #5d5dcc; }
.ctl-sh { fill: #777; opacity: .7; }
.ctl-w, .track, .thumb, .cap { fill: #fff; }
.track { stroke: #8c8c8c; stroke-width: 3; }
.cap { stroke: #bbb; stroke-width: 2; }
.thumb { stroke: #bbb; stroke-width: 3; fill: #f1f1f1; }
.ticks { stroke: #c8c8c8; stroke-width: 2; }
.chev { fill: none; stroke: #4a72c8; stroke-width: 9; }
.handc { fill: none; stroke: #6f8fd0; stroke-width: 2.500; }
.pm { fill: none; stroke: #4a72c8; stroke-width: 4.500; }

.maptypes { position: absolute; left: 531px; top: 11px; display: grid; grid-template-columns: 158px 159px 159px; grid-auto-rows: 44px; font: 27px "Liberation Sans", sans-serif; color: #111; }
.mt { display: flex; align-items: center; justify-content: center; background: #fff; border: 4px solid #111; margin-left: -1px; }
.mt-on { font-weight: bold; border-width: 5px 5px 6px 5px; }
.mt-t { height: 37px; margin-top: 3px; border-width: 1px 4px 4px 1px; border-color: #999 #111 #111 #999; }

.bubble { position: absolute; left: 406px; top: 119px; width: 581px; height: 271px; padding: 38px 0 0 72px; background: #fff; border-radius: 44px; border: 2px solid #aaa; border-width: 2px 0 0 2px; font: 26px "Liberation Sans", sans-serif; color: #111; }
.b-title { position: relative; font-size: 25.500px; font-weight: bold; text-decoration: underline; line-height: 30px; }
.b-data { position: relative; margin: 3px 0 0 -72px; display: grid; grid-template-columns: 168px 140px; grid-auto-rows: 54.500px; align-items: center; }
.b-data dt { text-align: right; }
.b-data dd { margin: 0; text-align: right; }
.art { position: absolute; display: block; background: #888; }
.art-h { left: 0; right: 0; top: 211px; height: 2px; }
.art-v { left: 519px; top: 213px; bottom: 0; width: 2px; }
.art-r { right: 0; top: 55px; width: 2px; height: 158px; }
.scroll { position: absolute; left: 457px; top: 35px; width: 41px; height: 197px; display: flex; flex-direction: column; align-items: center; justify-content: space-between; padding: 16px 0; background: linear-gradient(90deg, #ccc, #f8f8f8 40%, #f8f8f8 60%, #ccc); border: 1px solid #ddd; }
.scroll-a { width: 16px; height: 14px; }
.scroll-t { width: 36px; height: 105px; }
.scroll-t svg { display: block; width: 36px; height: 105px; }
.b-close { position: absolute; left: 519px; top: 26px; width: 28px; height: 28px; }
.grip { position: absolute; right: 3px; bottom: 1px; width: 28px; height: 28px; }
```
